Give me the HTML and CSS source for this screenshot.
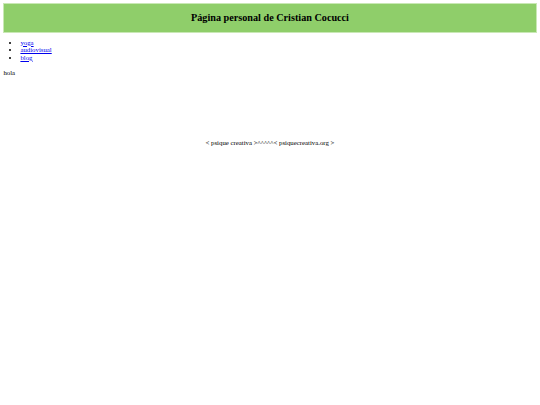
FILE: index.html
```html
<!DOCTYPE html>
<html lang="es">
<head>
<meta charset="utf-8">
<title>Cristian Cocucci</title>
<link rel="stylesheet" href="styles.css">
</head>
<body>
<header class="banner">
  <h2 class="title">Página personal de Cristian Cocucci</h2>
</header>
<ul class="menu">
  <li><a href="#">yoga</a></li>
  <li><a href="#">audiovisual</a></li>
  <li><a href="#">blog</a></li>
</ul>
<p class="text">hola</p>
<footer class="foot">&lt; psique creativa &gt;^^^^^&lt; psiquecreativa.org &gt;</footer>
</body>
</html>
```
FILE: styles.css
```css
html, body {
  background: #ffffff;
}
body {
  margin: 3px 3.4px;
  font-family: "Liberation Serif", "Times New Roman", serif;
  font-size: 6.8px;
  line-height: 7.6px;
  color: #000;
}
.banner {
  background: #8fce6a;
  border: 1px solid #c9e8b5;
  padding: 0;
  height: 27.5px;
  display: flex;
  align-items: center;
  justify-content: center;
}
.title {
  margin: 0;
  font-size: 10.2px;
  line-height: 12px;
  font-weight: bold;
}
.menu {
  margin: 6.2px 0 6.8px;
  padding-left: 17px;
}
.menu a {
  color: #0000ee;
}
.text {
  margin: 7.5px 0;
}
.foot {
  margin-top: 62.5px;
  text-align: center;
}
```
